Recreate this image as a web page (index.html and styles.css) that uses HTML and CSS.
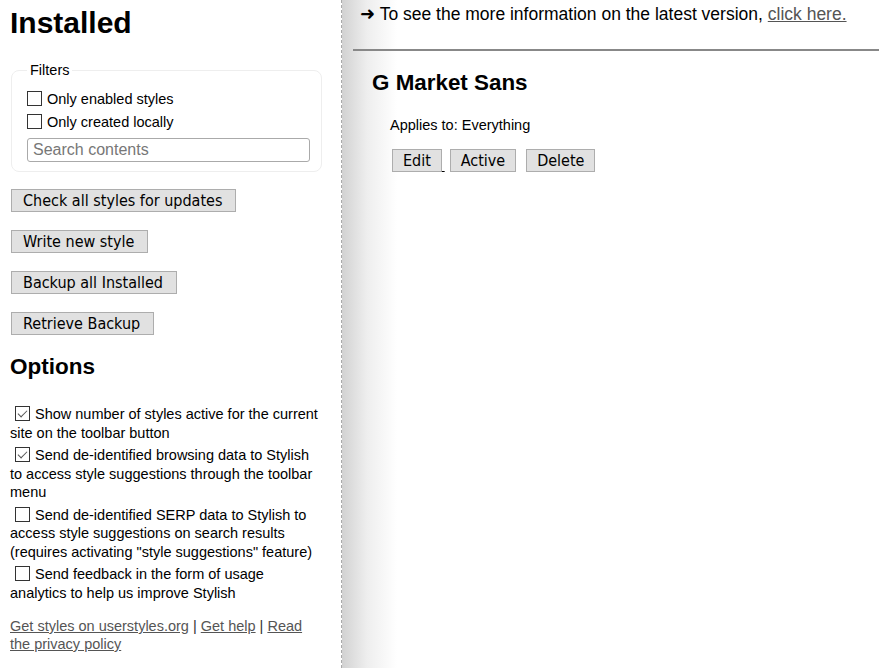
FILE: index.html
```html
<!DOCTYPE html>
<html lang="en">
<head>
  <meta charset="UTF-8">
  <title>Installed</title>
  <link rel="stylesheet" href="styles.css">
</head>
<body>

<div class="sidebar">
  <h1>Installed</h1>

  <fieldset class="filters">
    <legend>Filters</legend>
    <label class="check"><input type="checkbox"> Only enabled styles</label>
    <label class="check"><input type="checkbox"> Only created locally</label>
    <input type="search" class="search" placeholder="Search contents">
  </fieldset>

  <div class="actions">
    <button>Check all styles for updates</button>
    <button>Write new style</button>
    <button>Backup all Installed</button>
    <button>Retrieve Backup</button>
  </div>

  <h2>Options</h2>

  <div class="options">
    <label class="option"><input type="checkbox" checked>Show number of styles active for the current site on the toolbar button</label>
    <label class="option"><input type="checkbox" checked>Send de-identified browsing data to Stylish to access style suggestions through the toolbar menu</label>
    <label class="option"><input type="checkbox">Send de-identified SERP data to Stylish to access style suggestions on search results (requires activating "style suggestions" feature)</label>
    <label class="option"><input type="checkbox">Send feedback in the form of usage analytics to help us improve Stylish</label>
  </div>

  <p class="links">
    <a href="#">Get styles on userstyles.org</a> | <a href="#">Get help</a> | <a href="#">Read the privacy policy</a>
  </p>
</div>

<div class="main">
  <p class="notice"><span class="arrow">➜</span> To see the more information on the latest version, <a href="#">click here.</a></p>
  <hr>

  <div class="style-entry">
    <h2>G Market Sans</h2>
    <p class="applies">Applies to: Everything</p>
    <div class="entry-actions">
      <a href="#" class="edit"><button>Edit</button><span class="gap">&nbsp;</span></a>
      <button>Active</button>
      <button class="delete">Delete</button>
    </div>
  </div>
</div>

</body>
</html>
```

FILE: styles.css
```css
body {
  margin: 0;
  font-family: "Liberation Sans", Arial, sans-serif;
  font-size: 14.5px;
  color: #000;
  background: #fff;
  display: flex;
  min-height: 668px;
}
.sidebar {
  width: 331px;
  flex: none;
  padding: 0 0 0 10px;
  border-right: 1px dashed #aaa;
}
h1 {
  font-size: 30px;
  margin: 6px 0 22px;
  line-height: 34px;
}
.filters {
  margin: 0 19px 0 1px;
  padding: 9px 10px 9px 15px;
  border: 1px solid #eee;
  border-radius: 8px;
}
.filters legend {
  padding: 0 3px;
  font-size: 14.5px;
}
.check {
  display: flex;
  align-items: center;
  height: 23px;
}
input[type="checkbox"] {
  width: 15px;
  height: 15px;
  margin: 0 5px 0 0;
  appearance: none;
  border: 1px solid #333;
  background: #fff;
  flex: none;
  position: relative;
}
input[type="checkbox"]:checked::after {
  content: "";
  position: absolute;
  left: 4px;
  top: 1px;
  width: 4px;
  height: 8px;
  border: solid #555;
  border-width: 0 1px 1px 0;
  transform: rotate(45deg);
}
.search {
  display: block;
  width: 283px;
  height: 24px;
  box-sizing: border-box;
  margin-top: 5px;
  padding: 0 5px;
  border: 1px solid #aaa;
  border-radius: 3px;
  font-family: "Liberation Sans", Arial, sans-serif;
  font-size: 16px;
  color: #000;
}
.search::placeholder {
  color: #777;
}
button {
  font-family: "DejaVu Sans Condensed", Tahoma, sans-serif;
  font-size: 16px;
  background-color: #e1e1e1;
  border: 1px solid #adadad;
  padding: 0 10px;
  height: 23px;
  color: #000;
  border-radius: 0;
}
.actions {
  display: flex;
  flex-direction: column;
  align-items: flex-start;
  gap: 18px;
  margin-top: 17px;
  padding-left: 1px;
}
.actions button {
  padding: 0 13px 0 11px;
}
.sidebar h2 {
  font-size: 22.5px;
  margin: 19px 0 25px;
  line-height: 26px;
}
.options {
  display: flex;
  flex-direction: column;
  gap: 4px;
}
.option {
  display: block;
  line-height: 18.5px;
  padding-right: 19px;
}
.option input {
  display: inline-block;
  vertical-align: -2px;
  margin: 0 5px 0 5px;
}
.links {
  margin: 15px 0 0;
  line-height: 18px;
  color: #333;
  padding-right: 21px;
}
.links a, .notice a {
  color: #555;
}
.main {
  flex: 1;
  background: linear-gradient(to right, #d2d2d2 0, #eeeeee 25px, #fff 55px);
  padding-left: 11px;
}
.notice {
  font-size: 17.5px;
  margin: 4px 0 0 7px;
  line-height: 20px;
}
.arrow {
  font-family: "DejaVu Sans", sans-serif;
  font-size: 18px;
}
hr {
  margin: 25px 0 0;
  border: none;
  border-top: 2px solid #888;
}
.style-entry {
  padding-left: 19px;
}
.style-entry h2 {
  font-size: 22.4px;
  margin: 19px 0 0;
  line-height: 26px;
}
.applies {
  font-size: 14.5px;
  margin: 20px 0 0 18px;
  line-height: 18px;
}
.entry-actions {
  margin: 15px 0 0 20px;
  display: flex;
  align-items: flex-start;
}
.entry-actions .edit {
  display: flex;
  align-items: flex-end;
  color: #000;
  text-decoration: none;
  margin-right: 5px;
}
.entry-actions .gap {
  font-size: 10px;
  line-height: 10px;
  text-decoration: underline;
}
.entry-actions .delete {
  margin-left: 10px;
}
```
